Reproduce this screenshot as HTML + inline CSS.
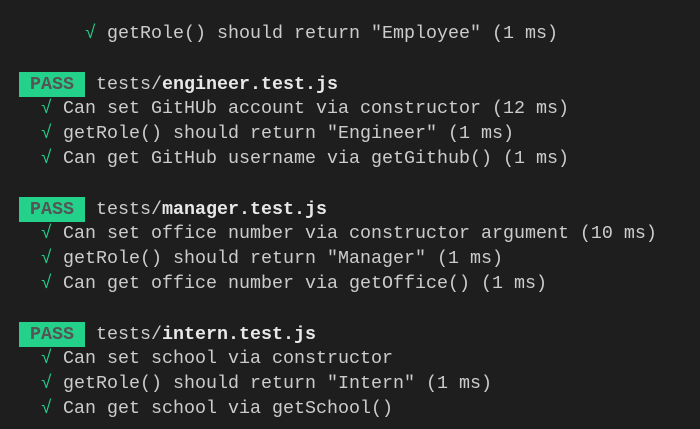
<!DOCTYPE html>
<html><head><style>
html,body{margin:0;padding:0;background:#1e1e1e;width:700px;height:429px;overflow:hidden}
pre{margin:0;position:absolute;left:19px;top:22px;font-family:"Liberation Mono",monospace;font-size:18.33px;line-height:24.8px;color:#cccccc}
.g{color:#23d18b}
.p{background:#23d18b;color:#555;font-weight:bold;font-family:"Liberation Mono",monospace;display:inline-block;width:66px;text-align:center;line-height:25px}
b{color:#e8e8e8}
</style></head><body>
<pre>      <span class="g">√</span> getRole() should return "Employee" (1 ms)

<span class="p">PASS</span> tests/<b>engineer.test.js</b>
  <span class="g">√</span> Can set GitHUb account via constructor (12 ms)
  <span class="g">√</span> getRole() should return "Engineer" (1 ms)
  <span class="g">√</span> Can get GitHub username via getGithub() (1 ms)

<span class="p">PASS</span> tests/<b>manager.test.js</b>
  <span class="g">√</span> Can set office number via constructor argument (10 ms)
  <span class="g">√</span> getRole() should return "Manager" (1 ms)
  <span class="g">√</span> Can get office number via getOffice() (1 ms)

<span class="p">PASS</span> tests/<b>intern.test.js</b>
  <span class="g">√</span> Can set school via constructor
  <span class="g">√</span> getRole() should return "Intern" (1 ms)
  <span class="g">√</span> Can get school via getSchool()</pre>
</body></html>
